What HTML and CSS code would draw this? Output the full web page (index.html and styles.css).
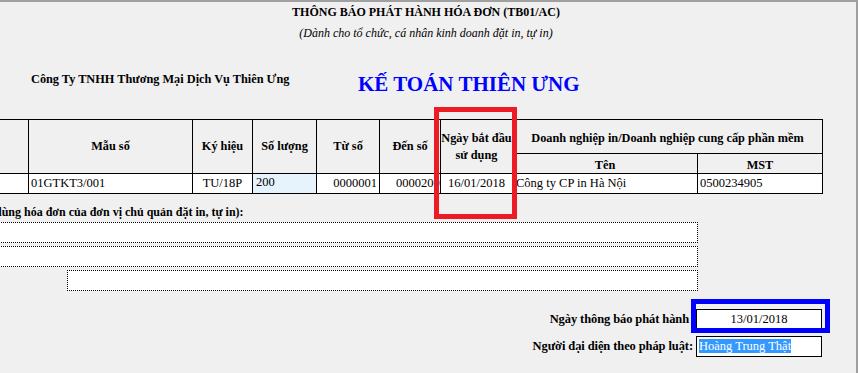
FILE: index.html
```html
<!DOCTYPE html>
<html lang="vi">
<head>
<meta charset="utf-8">
<link rel="stylesheet" href="styles.css">
</head>
<body>
<div class="page">
  <div class="title">THÔNG BÁO PHÁT HÀNH HÓA ĐƠN (TB01/AC)</div>
  <div class="subtitle">(Dành cho tổ chức, cá nhân kinh doanh đặt in, tự in)</div>
  <div class="company-row">
    <div class="company">Công Ty TNHH Thương Mại Dịch Vụ Thiên Ưng</div>
    <div class="brand">KẾ TOÁN THIÊN ƯNG</div>
  </div>
  <table class="grid">
    <colgroup>
      <col style="width:68px"><col style="width:164px"><col style="width:60px"><col style="width:64px"><col style="width:63px"><col style="width:61px"><col style="width:72px"><col style="width:185px"><col style="width:125px">
    </colgroup>
    <thead>
      <tr class="h1">
        <th rowspan="2"></th>
        <th rowspan="2">Mẫu số</th>
        <th rowspan="2">Ký hiệu</th>
        <th rowspan="2">Số lượng</th>
        <th rowspan="2">Từ số</th>
        <th rowspan="2">Đến số</th>
        <th rowspan="2" class="two">Ngày bắt đầu<br>sử dụng</th>
        <th colspan="2" class="top">Doanh nghiệp in/Doanh nghiệp cung cấp phần mềm</th>
      </tr>
      <tr class="h2">
        <th class="sub">Tên</th>
        <th class="sub">MST</th>
      </tr>
    </thead>
    <tbody>
      <tr class="data">
        <td></td>
        <td class="left">01GTKT3/001</td>
        <td class="center">TU/18P</td>
        <td class="qty">200</td>
        <td class="right">0000001</td>
        <td class="clip"><div>0000200</div></td>
        <td class="center">16/01/2018</td>
        <td class="left tight">Công ty CP in Hà Nội</td>
        <td class="left">0500234905</td>
      </tr>
    </tbody>
  </table>
  <div class="note">dùng hóa đơn của đơn vị chủ quản đặt in, tự in):</div>
  <div class="dots">
    <div class="dot-box wide"></div>
    <div class="dot-box wide"></div>
    <div class="dot-box short"></div>
  </div>
  <div class="sign">
    <div class="sign-row">
      <div class="label">Ngày thông báo phát hành</div>
      <div class="field date">13/01/2018<span class="blue-mark"></span></div>
    </div>
    <div class="sign-row second">
      <div class="label">Người đại diện theo pháp luật:</div>
      <div class="field name"><span class="sel">Hoàng Trung Thật</span></div>
    </div>
  </div>
  <div class="red-mark"></div>
</div>
</body>
</html>
```
FILE: styles.css
```css
* { box-sizing: border-box; }
html, body { margin: 0; padding: 0; }
body {
  font-family: "Liberation Serif", "Times New Roman", serif;
  color: #000;
  background: #fff;
  width: 859px;
  height: 373px;
  overflow: hidden;
}
.page {
  position: relative;
  width: 858px;
  height: 373px;
  background: #f0f0f0;
  border-top: 2px solid #a0a0a0;
  border-right: 2px solid #a0a0a0;
  overflow: hidden;
}
.title {
  font-weight: bold;
  font-size: 12px;
  line-height: 16px;
  padding-top: 2px;
  text-align: center;
  padding-right: 4px;
}
.subtitle {
  font-style: italic;
  font-size: 12px;
  line-height: 16px;
  margin-top: 5px;
  text-align: center;
  padding-right: 4px;
}
.company-row {
  display: flex;
  align-items: center;
  margin-top: 28px;
  height: 30px;
}
.company {
  font-weight: bold;
  font-size: 12.3px;
  margin-left: 31px;
  margin-top: -10px;
  width: 327px;
}
.brand {
  font-weight: bold;
  font-size: 21px;
  color: #0000ff;
}
.grid {
  margin-top: 20px;
  margin-left: -40px;
  border-collapse: collapse;
  table-layout: fixed;
  width: 862px;
  font-family: "Liberation Serif", "Times New Roman", serif;
  font-size: 12px;
}
.grid th, .grid td {
  font-family: "Liberation Serif", "Times New Roman", serif;
  border: 1px solid #000;
  padding: 0;
  white-space: nowrap;
}
.grid th {
  font-weight: bold;
  font-size: 12.3px;
  text-align: center;
  background: #f0f0f0;
}
.grid th.two { line-height: 17px; }
.grid th.top { padding-top: 3px; }
.grid th.sub { padding-top: 3px; }
.grid .h1 th { height: 34px; }
.grid .h2 th { height: 20px; }
.grid .data td {
  height: 20px;
  background: #fff;
  font-size: 12.5px;
}
.grid td.left { padding-left: 2px; }
.grid td.tight { padding-left: 3px; }
.grid td.center { text-align: center; }
.grid td.right { text-align: right; padding-right: 2px; }
.grid td.qty {
  background: #e6f2fc;
  vertical-align: top;
  padding-left: 3px;
  line-height: 16px;
}
.grid td.clip div {
  overflow: hidden;
  padding-left: 16px;
}
.note {
  font-weight: bold;
  font-size: 12px;
  margin-left: -5px;
  margin-top: 10px;
  line-height: 16px;
}
.dots {
  display: flex;
  flex-direction: column;
  gap: 3px;
  margin-top: 2px;
}
.dot-box {
  height: 21px;
  background: #fff;
  border: 1px dotted #000;
}
.dot-box.wide { margin-left: -10px; width: 708px; }
.dot-box.short { margin-left: 67px; width: 631px; }
.sign {
  display: flex;
  flex-direction: column;
  margin-top: 18px;
}
.sign-row {
  display: flex;
  justify-content: flex-end;
  align-items: center;
  padding-right: 34px;
}
.sign-row.second { margin-top: 6px; }
.label {
  font-weight: bold;
  font-size: 12.5px;
  padding-right: 7px;
  letter-spacing: -0.1px;
}
.sign-row.second .label { padding-right: 3px; }
.field {
  position: relative;
  width: 126px;
  height: 21px;
  border: 1px solid #000;
  background: #fff;
  font-size: 12.5px;
  line-height: 19px;
}
.field.date { text-align: center; }
.field.name { padding-left: 2px; }
.sel {
  background: #3399ff;
  color: #fff;
}
.blue-mark {
  position: absolute;
  left: -6px;
  top: -11px;
  width: 139px;
  height: 34px;
  border: 5px solid #0000ff;
}
.red-mark {
  position: absolute;
  left: 434px;
  top: 105px;
  width: 83px;
  height: 112px;
  border: 5px solid #ed1c24;
}
```
